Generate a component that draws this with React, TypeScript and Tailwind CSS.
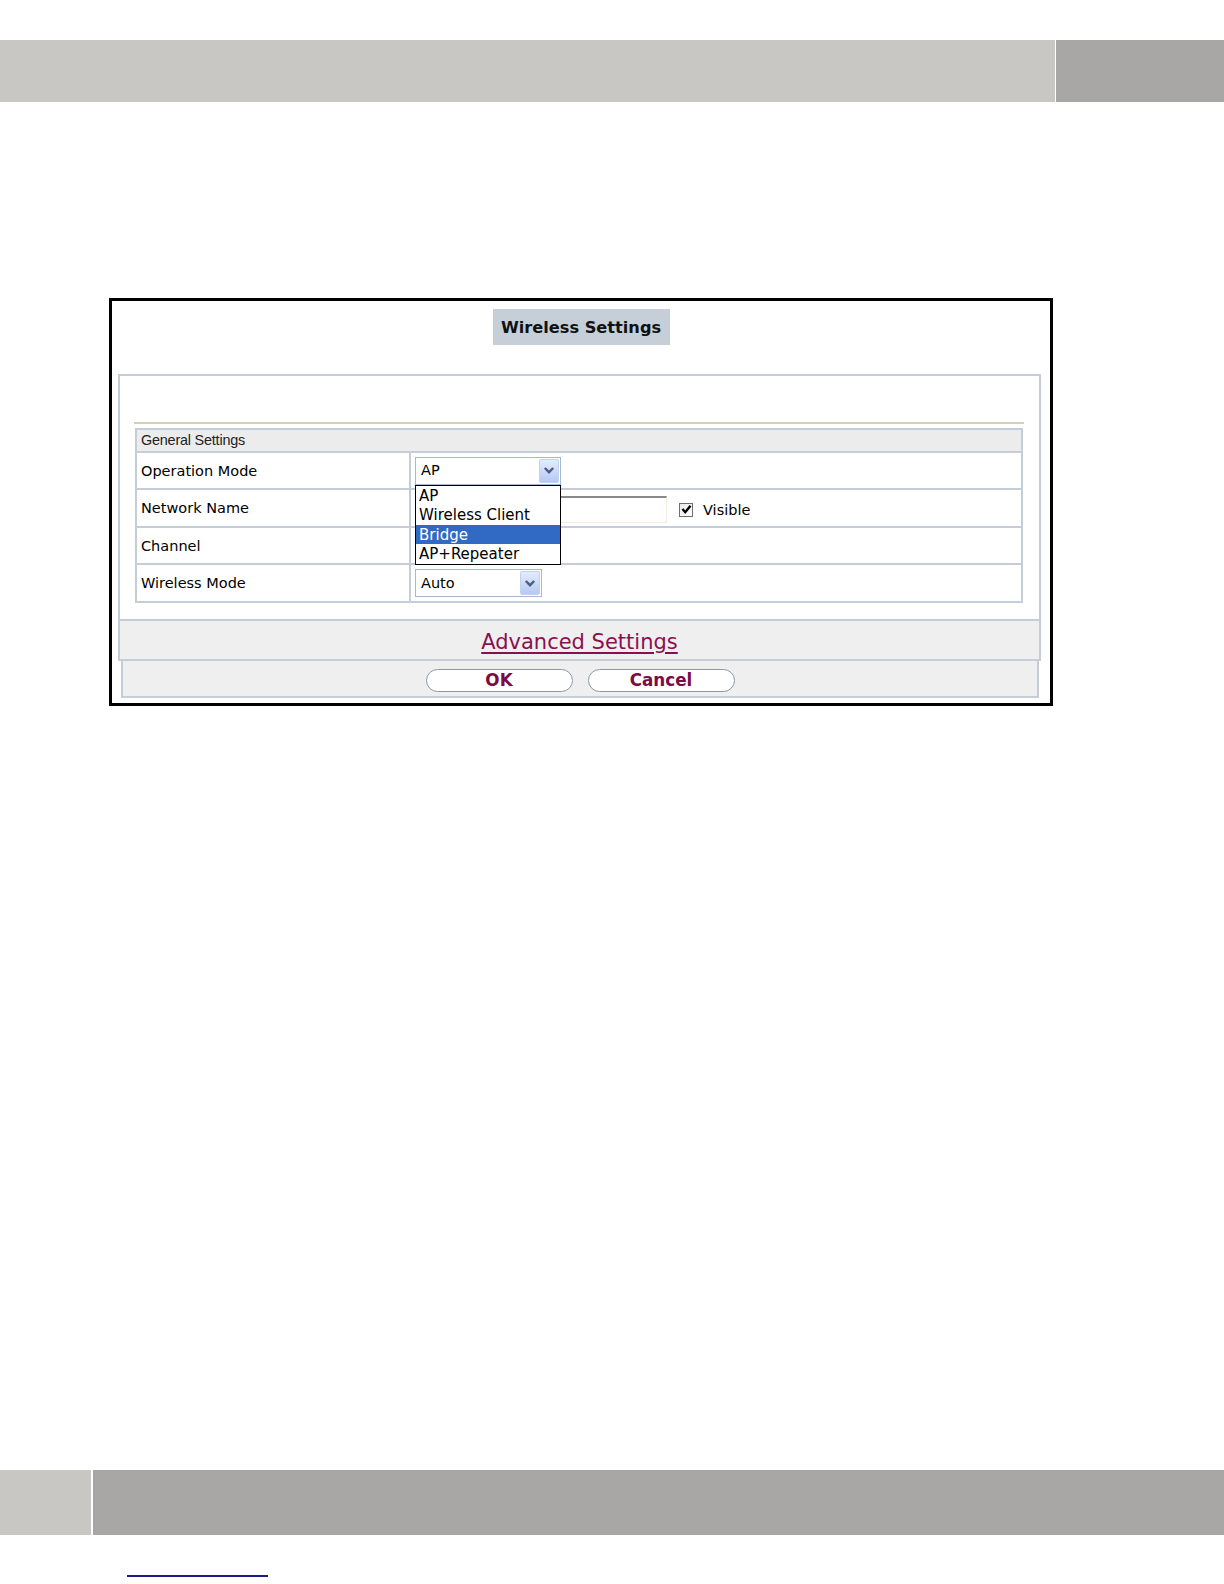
import type { ReactElement } from "react"

const dejavu = "font-['DejaVu_Sans',sans-serif]"
const arial = "font-['Liberation_Sans',Arial,sans-serif]"

function Chevron() {
  return (
    <svg width="12" height="9" viewBox="0 0 12 9" className="block">
      <path d="M1.8 2 L6 6.2 L10.2 2" fill="none" stroke="#4a5f86" strokeWidth="2.4" />
    </svg>
  )
}

function Select({ value, width }: { value: string; width: string }) {
  return (
    <div className={`flex h-[28px] items-center justify-between border border-[#a5b8cf] bg-white pl-[5px] ${width}`}>
      <span className="pt-[1px] text-[14.5px] text-black">{value}</span>
      <span className="mr-[1px] flex h-[24px] w-[20px] items-center justify-center rounded-[2px] border border-[#c2d1ee] bg-gradient-to-b from-[#e4ecfd] to-[#b6c9f2]">
        <Chevron />
      </span>
    </div>
  )
}

const options = ["AP", "Wireless Client", "Bridge", "AP+Repeater"]

const labelCell = "flex w-[274px] items-center border-r-2 border-[#c5cdd9] pl-[4px] pt-[2px] text-[14.5px]"

export default function App(): ReactElement {
  return (
    <div className={`flex h-[1584px] w-[1224px] flex-col bg-white ${dejavu}`}>
      {/* ── header bar ── */}
      <div className="mt-[40px] flex h-[62px]">
        <div className="flex-1 bg-[#c8c7c4]" />
        <div className="w-[1px] bg-white" />
        <div className="w-[168px] bg-[#a8a7a5]" />
      </div>

      {/* ── dialog frame ── */}
      <div className="ml-[109px] mt-[196px] flex h-[408px] w-[944px] flex-col border-[3px] border-black">
        <div className="mt-[8px] flex h-[36px] w-[177px] items-center justify-center self-center bg-[#c6cfd8] pt-[3px]">
          <span className="text-[16.2px] font-bold text-[#111]">Wireless Settings</span>
        </div>

        <div className="ml-[6px] mt-[29px] flex h-[247px] w-[923px] flex-col border-2 border-[#c5cdd9] bg-white">
          <div className="ml-[14px] mt-[46px] h-[2px] w-[890px] bg-[#d3cfbb]" />

          <div className="ml-[15px] mt-[4px] w-[888px] border-2 border-[#c5cdd9] text-black">
            <div className={`flex h-[23px] items-center border-b-2 border-[#c5cdd9] bg-[#ececec] pl-[4px] pt-[1px] text-[14.4px] tracking-[-0.2px] text-[#222] ${arial}`}>
              General Settings
            </div>

            <div className="flex h-[37px] border-b-2 border-[#c5cdd9]">
              <div className={labelCell}>Operation Mode</div>
              <div className="flex flex-1 items-center pl-[4px]">
                <div className="relative">
                  <Select value="AP" width="w-[146px]" />
                  <div className="absolute left-0 top-[28px] z-10 w-[146px] border border-black bg-white">
                    {options.map((o) => (
                      <div
                        key={o}
                        className={`flex h-[19.5px] items-center pl-[3px] pt-[1px] text-[15px] ${
                          o === "Bridge" ? "bg-[#316ac5] text-white" : "text-black"
                        }`}
                      >
                        {o}
                      </div>
                    ))}
                  </div>
                </div>
              </div>
            </div>

            <div className="flex h-[38px] border-b-2 border-[#c5cdd9]">
              <div className={labelCell}>Network Name</div>
              <div className="flex flex-1 items-center pl-[4px]">
                <div className="mt-[2px] h-[27px] w-[252px] border-l-2 border-t-2 border-[#8a8a8a] border-b border-r border-b-[#f0ece0] border-r-[#f0ece0] bg-white" />
                <span className="ml-[12px] mt-[3px] flex h-[14px] w-[14px] items-center justify-center border border-[#6f6f6f] bg-gradient-to-br from-[#e8e8e8] to-white">
                  <svg width="11" height="11" viewBox="0 0 11 11">
                    <path d="M1.5 5 L4.2 8.2 L9.5 1.8" fill="none" stroke="#000" strokeWidth="2.4" />
                  </svg>
                </span>
                <span className="ml-[10px] mt-[6px] text-[14.5px]">Visible</span>
              </div>
            </div>

            <div className="flex h-[37px] border-b-2 border-[#c5cdd9]">
              <div className={labelCell}>Channel</div>
              <div className="flex-1" />
            </div>

            <div className="flex h-[36px]">
              <div className={labelCell}>Wireless Mode</div>
              <div className="flex flex-1 items-center pl-[4px]">
                <Select value="Auto" width="w-[127px]" />
              </div>
            </div>
          </div>
        </div>

        <div className="ml-[6px] flex h-[40px] w-[923px] items-center justify-center border-x-2 border-b-2 border-[#c5cdd9] bg-[#efefef] pt-[5px]">
          <a className="text-[21px] text-[#8b0f4f] underline decoration-[2px] underline-offset-[3px]">
            Advanced Settings
          </a>
        </div>

        <div className="ml-[9px] flex h-[37px] w-[918px] items-center justify-center gap-[15px] border-x-2 border-b-2 border-[#c5cdd9] bg-[#efefef] pt-[3px]">
          <button className="flex h-[23px] w-[147px] items-center justify-center rounded-full border border-[#8d97a3] bg-white pt-[2px] text-[16.8px] font-bold text-[#7d0b45]">
            OK
          </button>
          <button className="flex h-[23px] w-[147px] items-center justify-center rounded-full border border-[#8d97a3] bg-white pt-[2px] text-[16.8px] font-bold text-[#7d0b45]">
            Cancel
          </button>
        </div>
      </div>

      {/* ── footer bar ── */}
      <div className="mt-[764px] flex h-[65px]">
        <div className="w-[91px] bg-[#c8c7c4]" />
        <div className="w-[2px] bg-white" />
        <div className="flex-1 bg-[#a8a7a5]" />
      </div>
      <div className="ml-[127px] mt-[40px] h-[2px] w-[141px] bg-[#1c1c88]" />
    </div>
  )
}
